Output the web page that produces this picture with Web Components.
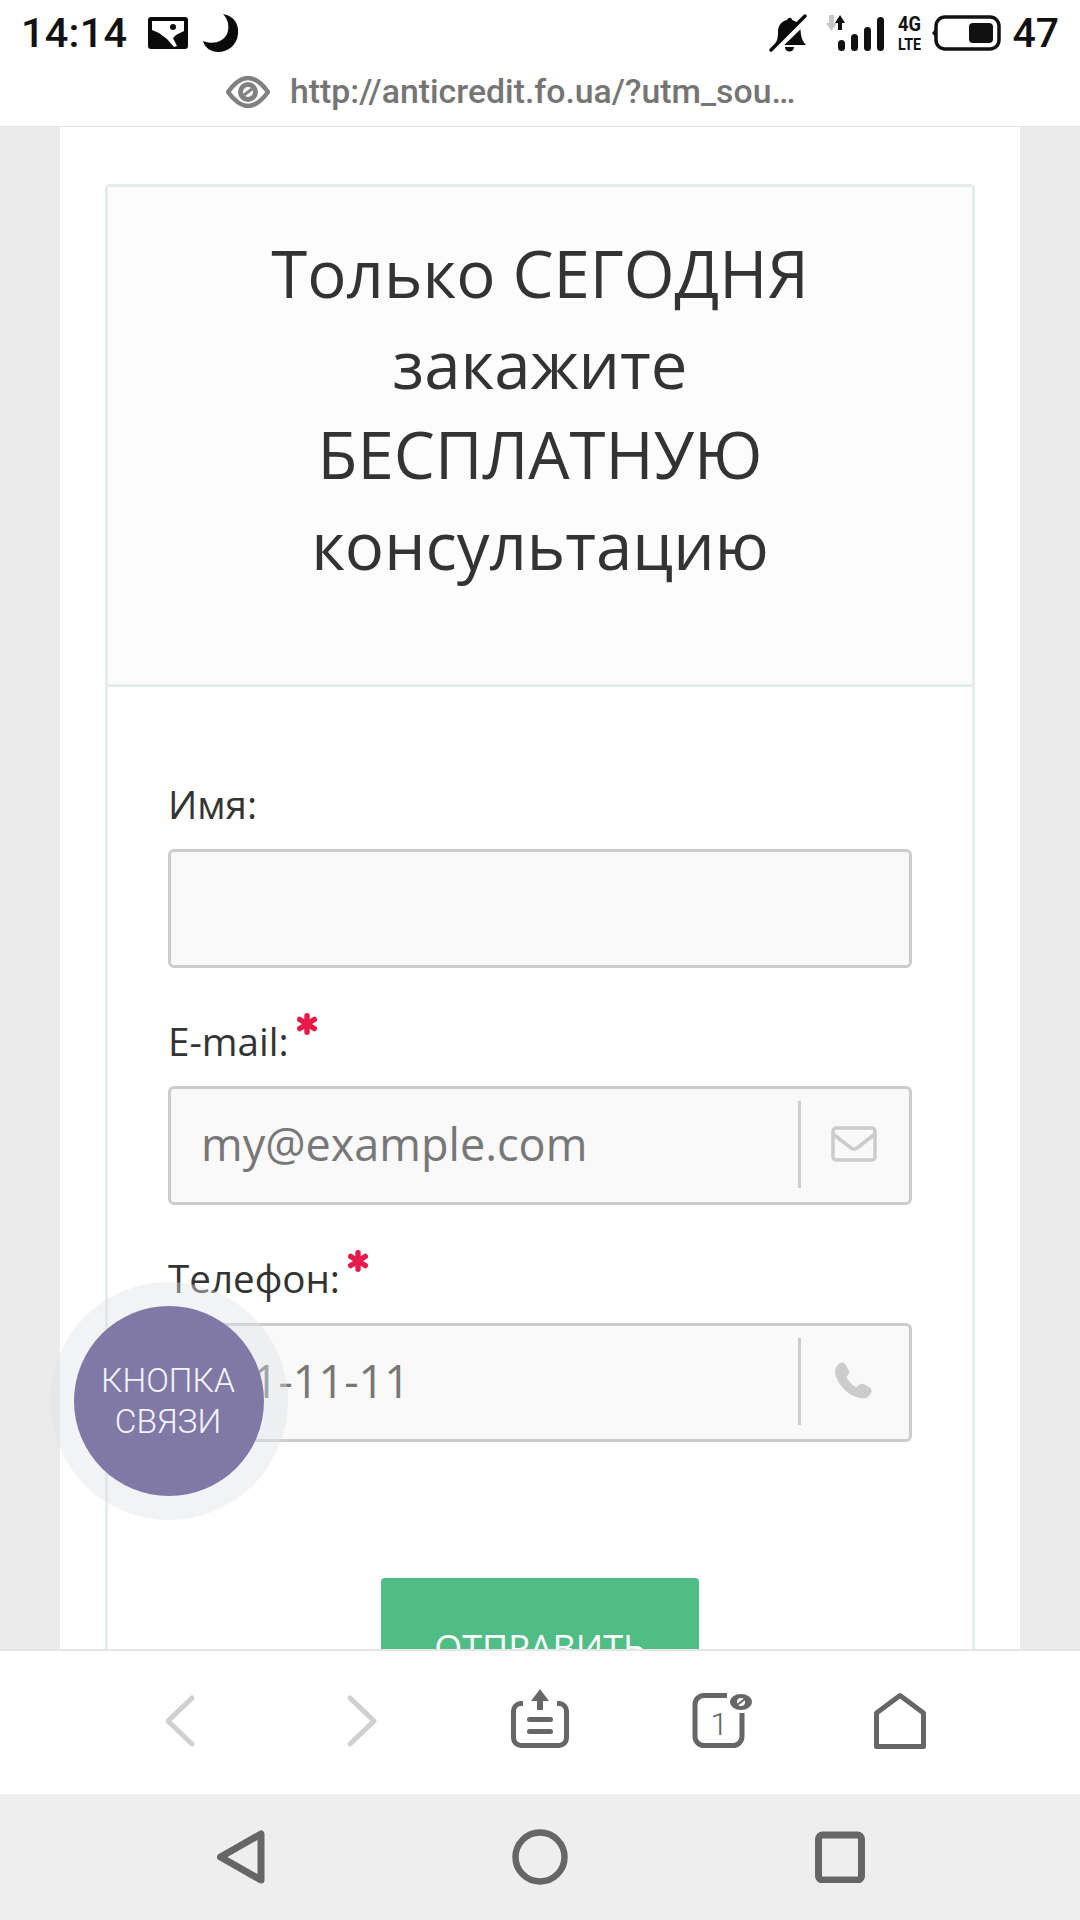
<!DOCTYPE html>
<html lang="ru"><head><meta charset="utf-8">
<style>
html,body{margin:0;padding:0;background:#ebebeb}
body{width:1080px;height:1920px;overflow:hidden}
</style></head><body>
<phone-app></phone-app>
<template id="t-app"><style>
:host{display:flex;flex-direction:column;width:1080px;height:1920px;position:relative;overflow:hidden;font-family:"Open Sans",sans-serif}
main{flex:1;min-height:0;overflow:hidden;background:#ebebeb;padding:0 60px}
.sheet{background:#fff;height:100%;padding:57px 45px 0 45px;box-sizing:border-box}
</style>
<status-bar></status-bar><url-bar></url-bar>
<main><div class="sheet"><form-card></form-card></div></main>
<tool-bar></tool-bar><nav-bar></nav-bar>
<call-button>КНОПКА<br>СВЯЗИ</call-button></template>

<template id="t-status"><style>
:host{display:flex;align-items:center;height:62px;padding:4px 21px 0 21px;box-sizing:border-box;background:#fff;color:#111;font:500 41.500px Roboto,sans-serif}
svg{display:block;flex:none;overflow:visible}
.sp{flex:1}
.t{line-height:62px;letter-spacing:.2px}
</style>
<span class="t">14:14</span>
<svg style="margin-left:21px" width="40" height="34" viewBox="0 0 40 34"><rect x="0" y="1" width="40" height="32" rx="3" fill="#0a0a0a"/><path fill="#fff" d="M4 5H36V15L28 19 25 22 29 30 26 31 19 23 11 17 4 14z"/><circle cx="25" cy="11" r="3" fill="#0a0a0a"/></svg>
<svg style="margin-left:14px" width="38" height="40" viewBox="0 0 38 40"><path fill="#0a0a0a" d="M21 1c11 2 16 10 15 20-1 11-10 18-20 18C9 39 3 35 1 28c10 4 20 1 24-7 3-7 1-15-4-20z"/></svg>
<span class="sp"></span>
<svg width="38" height="40" viewBox="0 0 38 40"><path fill="#0a0a0a" d="M5 32c3-3 4-7 4-13 0-7 4-11 9-12 1-3 5-3 5 0 2 .6 4 1.500 5.500 3L5 32zM12 32l19-19c1 5 0 13 6 19zM16 34h9c0 6-9 6-9 0z"/><path stroke="#fff" stroke-width="3" d="M7 38L38 8"/><path stroke="#0a0a0a" stroke-width="3.500" stroke-linecap="round" d="M2 37L36 3"/></svg>
<svg style="margin-left:20px" width="60" height="38" viewBox="0 0 60 38"><path fill="#c8c8c8" d="M2 1h5v8h3l-5.500 8L-1 9h3z"/><path fill="#111" d="M13 1l5 8h-3v7h-4V9H8z"/><g fill="#111"><rect x="11" y="26" width="7" height="11" rx="3.500"/><rect x="24" y="20" width="7" height="17" rx="3.500"/><rect x="37" y="13" width="7" height="24" rx="3.500"/><rect x="50" y="3" width="7" height="34" rx="3.500"/></g></svg>
<svg style="margin-left:10px" width="25" height="36" viewBox="0 0 25 36"><text x="1" y="16" textLength="23" lengthAdjust="spacingAndGlyphs" font-family="Roboto" font-weight="700" font-size="20" fill="#111">4G</text><text x="1" y="35" textLength="23" lengthAdjust="spacingAndGlyphs" font-family="Roboto" font-weight="700" font-size="17" fill="#111">LTE</text></svg>
<svg style="margin-left:10px" width="69" height="36" viewBox="0 0 69 36"><path fill="#111" d="M0 18l4-5v10z"/><rect x="4" y="2" width="63" height="32" rx="9" fill="none" stroke="#111" stroke-width="3.500"/><rect x="37" y="8" width="24" height="20" rx="4" fill="#111"/></svg>
<span style="margin-left:11px;line-height:62px;font-size:41px">47</span></template>

<template id="t-url"><style>
:host{display:flex;align-items:center;height:65px;padding:0 0 5px 226px;box-sizing:border-box;background:#fff;border-bottom:1px solid #e4e4e4;color:#757575;font:500 33.800px Roboto,sans-serif;gap:20px}
svg{flex:none;display:block}
</style>
<svg width="44" height="32" viewBox="0 0 44 32"><path fill="none" stroke="#808080" stroke-width="4.500" d="M2 16C10 5 16 2 22 2s12 3 20 14c-8 11-14 14-20 14S10 27 2 16z"/><circle cx="22" cy="16" r="7.500" fill="none" stroke="#808080" stroke-width="5"/><path stroke="#808080" stroke-width="3" d="M18 19l8-6"/></svg>
<span>http://anticredit.fo.ua/?utm_sou…</span></template>

<template id="t-card"><style>
:host{display:block;border:3px solid #e4edea;border-bottom:0;border-radius:5px 5px 0 0;height:1600px;box-sizing:border-box;background:#fff;color:#333}
header{background:#fcfcfc;border-bottom:3px solid #e4edea;height:500px;box-sizing:border-box;padding-top:41px;text-align:center;font-size:65.300px;line-height:90.600px}
.body{padding:85px 60px 0 60px}
.submit{display:block;width:318px;height:120px;margin:136px auto 0;background:#4fbd85;border-radius:4px 4px 0 0;color:#fff;text-align:center;font-size:36px;line-height:140px}
</style>
<header>Только СЕГОДНЯ<br>закажите<br>БЕСПЛАТНУЮ<br>консультацию</header>
<div class="body">
<form-field label="Имя:"></form-field>
<form-field label="E-mail:" required placeholder="my@example.com" icon="mail"></form-field>
<form-field label="Телефон:" required placeholder="111-11-11" icon="phone"></form-field>
<div class="submit">ОТПРАВИТЬ</div>
</div></template>

<template id="t-field"><style>
:host{display:block;padding-top:7px;margin-bottom:41px;font-family:"Open Sans",sans-serif}
label{display:flex;height:50px;line-height:50px;font-size:38.600px;color:#333;margin:0 0 20px;align-items:center}
label svg{margin:-35px 0 0 8px;display:none}
:host([required]) label svg{display:block}
.box{display:flex;align-items:center;height:119px;box-sizing:border-box;background:#f9f9f9;border:3px solid #ccc;border-radius:6px}
.ph{flex:1;padding:0 0 4px 30px;font-size:45px;color:#777}
.ad{display:none;align-items:center;justify-content:center;width:111px;height:87px;margin-bottom:2px;padding:0 3px 2px 0;border-left:3px solid #ccc;box-sizing:border-box}
</style>
<label><span id="l"></span><svg width="20" height="22" viewBox="0 0 22 24"><g stroke="#e8194b" stroke-width="6" stroke-linecap="round"><path d="M11 3v18M3 7l16 10M19 7L3 17"/></g></svg></label>
<div class="box"><div class="ph" id="p"></div><div class="ad" id="a"></div></div></template>

<template id="t-tool"><style>
:host{display:grid;grid-template-columns:repeat(5,181px);align-items:center;height:145px;padding-left:89px;box-sizing:border-box;background:#fff;border-top:2px solid #e6e6e6}
div{display:flex;justify-content:center}
svg{display:block;overflow:visible}
</style>
<div style="margin-top:-3px"><svg width="32" height="52" viewBox="0 0 32 52"><path d="M28 3L4 26l24 23" fill="none" stroke="#d0d0d0" stroke-width="5" stroke-linecap="round" stroke-linejoin="round"/></svg></div>
<div style="margin:-3px 0 0 2px"><svg width="32" height="52" viewBox="0 0 32 52"><path d="M4 3l24 23L4 49" fill="none" stroke="#d0d0d0" stroke-width="5" stroke-linecap="round" stroke-linejoin="round"/></svg></div>
<div style="margin:-8px 3px 0 0"><svg width="58" height="60" viewBox="0 0 58 60"><path fill="none" stroke="#666" stroke-width="5" d="M12 14.500H10a7.500 7.500 0 0 0-7.500 7.500v27a7.500 7.500 0 0 0 7.500 7.500h38a7.500 7.500 0 0 0 7.500-7.500V22a7.500 7.500 0 0 0-7.500-7.500H46"/><path fill="#666" d="M29 0l9 12h-6v9h-6v-9h-6z"/><rect x="16" y="28" width="26" height="5" rx="2.500" fill="#666"/><rect x="16" y="40" width="26" height="5" rx="2.500" fill="#666"/></svg></div>
<div style="margin:-5px 0 0 3px"><svg width="64" height="58" viewBox="0 0 64 58"><path fill="none" stroke="#666" stroke-width="5" d="M35 4.500H12a9 9 0 0 0-9 9v32a9 9 0 0 0 9 9h29a9 9 0 0 0 9-9V22"/><text x="27" y="44" text-anchor="middle" font-family="Roboto" font-weight="300" font-size="32" fill="#666">1</text><ellipse cx="49" cy="11" rx="11" ry="8" fill="#666"/><circle cx="49" cy="11" r="4" fill="#fff"/><path stroke="#666" stroke-width="2" d="M45 14l8-6"/></svg></div>
<div style="margin:-3px 7px 0 0"><svg width="52" height="56" viewBox="0 0 52 56"><path fill="none" stroke="#666" stroke-width="5" stroke-linejoin="round" d="M2.500 53.500V20L26 2.500 49.500 20v33.500z"/></svg></div>
</template>

<template id="t-nav"><style>
:host{display:grid;grid-template-columns:repeat(3,299.500px);align-items:center;height:126px;padding-left:91px;box-sizing:border-box;background:#eee}
div{display:flex;justify-content:center}
svg{display:block}
</style>
<div><svg width="48" height="54" viewBox="0 0 48 54"><path fill="none" stroke="#666" stroke-width="7" stroke-linejoin="round" d="M44 4v46L3.500 27z"/></svg></div>
<div><svg width="56" height="56" viewBox="0 0 56 56"><circle cx="28" cy="28" r="24.500" fill="none" stroke="#666" stroke-width="6.500"/></svg></div>
<div><svg width="50" height="52" viewBox="0 0 50 52"><rect x="3.500" y="4" width="43" height="45" rx="4" fill="none" stroke="#666" stroke-width="7"/></svg></div>
</template>

<template id="t-call"><style>
:host{display:flex;align-items:center;justify-content:center;position:absolute;left:74px;top:1306px;width:190px;height:190px;box-sizing:border-box;padding-right:2px;border-radius:50%;background:#8079a6;box-shadow:0 0 0 24px rgba(222,226,230,.42);color:#f4f3f8;font:300 33.500px/41px Roboto,sans-serif;text-align:center}
</style><div><slot></slot></div></template>

<script>
function mk(name,tid,init){customElements.define(name,class extends HTMLElement{constructor(){super();const s=this.attachShadow({mode:'open'});s.appendChild(document.getElementById(tid).content.cloneNode(true));}connectedCallback(){init&&init(this,this.shadowRoot)}})}
const icons={mail:'<svg width="46" height="36" viewBox="0 0 46 36"><g fill="none" stroke="#ccc" stroke-width="3.500" stroke-linejoin="round"><rect x="2" y="2" width="42" height="32" rx="3"/><path d="M2 8l18 14q3 2 6 0L44 8"/></g></svg>',
phone:'<svg width="38" height="38" viewBox="0 0 38 38"><path fill="#ccc" d="M5 1c3-1 5 0 6 2l3 6c1 2 0 3-2 5-1 1 0 2 2 5 3 4 5 5 7 6 2 0 3-3 5-3 2-1 4 1 8 3 3 2 3 4 2 6-2 4-5 6-10 5C14 35 2 22 0 11 0 6 2 3 5 1z"/></svg>'};
mk('phone-app','t-app');mk('status-bar','t-status');mk('url-bar','t-url');mk('form-card','t-card');
mk('form-field','t-field',(h,s)=>{s.getElementById('l').textContent=h.getAttribute('label');s.getElementById('p').textContent=h.getAttribute('placeholder')||'';const i=h.getAttribute('icon');if(i){const a=s.getElementById('a');a.style.display='flex';a.innerHTML=icons[i];}});
mk('tool-bar','t-tool');mk('nav-bar','t-nav');mk('call-button','t-call');
</script>
</body></html>
